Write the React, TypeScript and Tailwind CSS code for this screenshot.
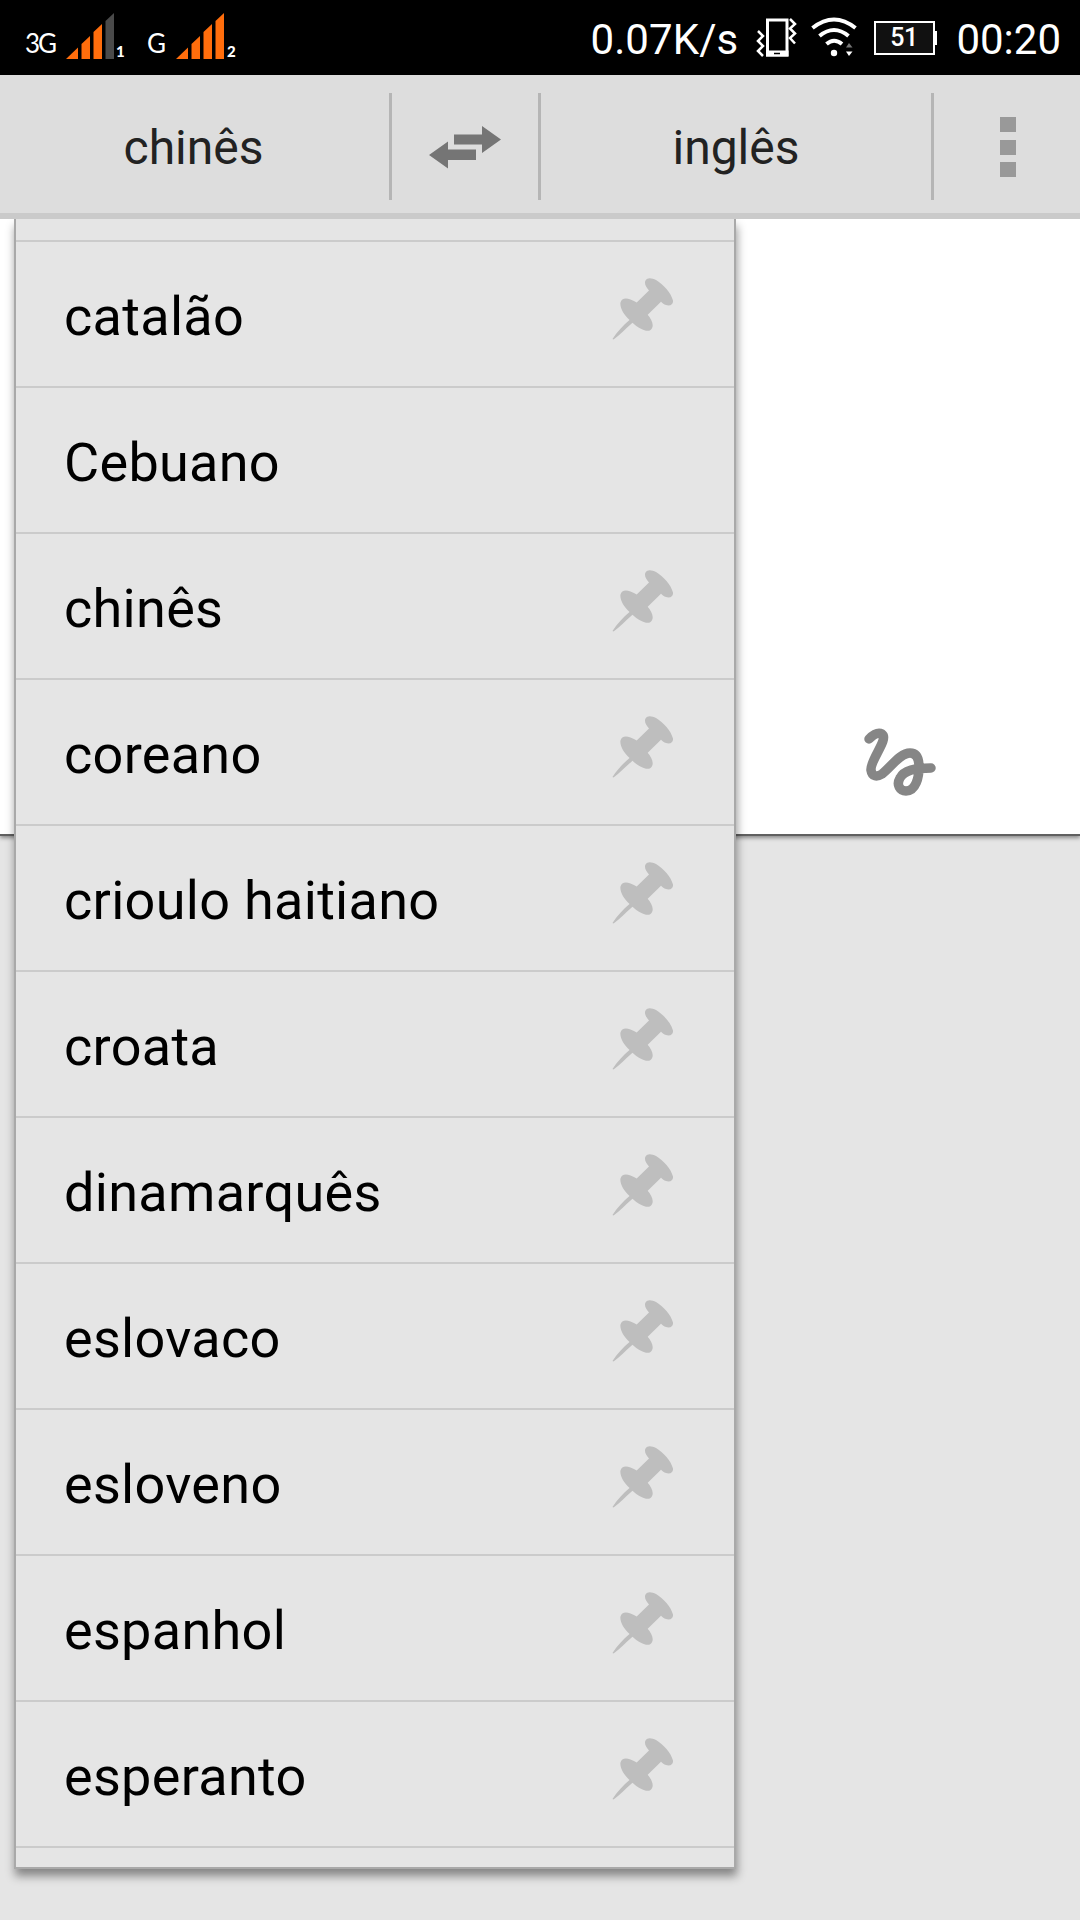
import React from 'react';

interface Language {
  name: string;
  pinnable: boolean;
}

const languages: Language[] = [
  { name: 'catalão', pinnable: true },
  { name: 'Cebuano', pinnable: false },
  { name: 'chinês', pinnable: true },
  { name: 'coreano', pinnable: true },
  { name: 'crioulo haitiano', pinnable: true },
  { name: 'croata', pinnable: true },
  { name: 'dinamarquês', pinnable: true },
  { name: 'eslovaco', pinnable: true },
  { name: 'esloveno', pinnable: true },
  { name: 'espanhol', pinnable: true },
  { name: 'esperanto', pinnable: true },
];

function PinIcon() {
  return (
    <svg width="62" height="62" viewBox="0 0 62 62" className="shrink-0" fill="#bebebe">
      <path d="M0.5 61 C5 54 11 47.500 17.500 42 C11.500 36.500 7.500 29.500 8.500 24.500 C9.500 20 14 19.500 18.500 21.500 C21 22.500 23 23.500 24.700 24.500 L37 12.500 C34 9 32 5.500 33.500 2.500 C35.500 -1 40 0 44 2 C52 7 59 15 61 22.500 C61.500 26.500 58 28.500 54 27 C52 26.500 50.500 25 49 23.700 L35.700 36.700 C38.500 40 41.500 45 40.500 49 C39 54 34 53.500 29.500 51 C26 49.500 23 47 20.500 44.700 C14 50.500 8 56.500 1.500 61.500 Z" />
    </svg>
  );
}

function SignalIcon({ weak }: { weak?: boolean }) {
  return (
    <svg width="49" height="47" viewBox="0 0 49 47" fill="#ff6d0c">
      <path d="M0 46 L12 34.500 V46 Z" />
      <path d="M15.500 31 L24 23 V46 H15.500 Z" />
      <path d="M27.500 19 L36 11 V46 H27.500 Z" />
      <path d="M39.500 8 L48 0 V46 H39.500 Z" fill={weak ? '#4a4a4a' : '#ff6d0c'} />
    </svg>
  );
}

function StatusBar() {
  return (
    <div className="flex h-[75px] bg-black text-white">
      {/* SIM signals */}
      <div className="flex h-[60px] items-end pl-[25px]">
        <span className="w-[41px] font-['Lato'] text-[26px] leading-[34px] tracking-[-2px]">3G</span>
        <SignalIcon weak />
        <span className="w-[32px] pl-px font-['Lato'] text-[15px] leading-[18px] font-black">1</span>
        <span className="w-[29px] font-['Lato'] text-[26px] leading-[34px]">G</span>
        <SignalIcon />
        <span className="pl-0.5 font-['Lato'] text-[15px] leading-[18px] font-black">2</span>
      </div>

      {/* Network speed, icons and clock */}
      <div className="ml-auto flex h-[75px] items-center pr-[19px]">
        <span className="pt-1 text-[42px] leading-none tracking-[0.1px]">0.07K/s</span>
        <svg width="42" height="42" viewBox="0 0 42 42" className="ml-[18px]" fill="none" stroke="#fff">
          <rect x="11.500" y="3" width="19.500" height="35" strokeWidth="3" />
          <path d="M10 36.500 H32.500" strokeWidth="6" />
          <path d="M18 36.500 H24" stroke="#000" strokeWidth="1.500" />
          <path d="M34 2 L39 7 L34 11.500 L39 16.500 L34 21 L39 26.500" strokeWidth="2.500" />
          <path d="M2 14 L7 19 L2 24 L7 29 L2 34 L7 39" strokeWidth="2.500" />
        </svg>
        <svg width="46" height="42" viewBox="0 0 46 42" className="ml-[13px]" fill="none" stroke="#fff" strokeWidth="4">
          <path d="M1.500 11 Q23 -6 44.500 11" />
          <path d="M8.500 19 Q23 7 37.500 19" />
          <path d="M15.500 27 Q23 20.500 31 27" />
          <circle cx="23" cy="36" r="3.200" fill="#fff" stroke="none" />
          <path d="M35 30.500 L38 26 L41.500 30.500 Z" fill="#777" stroke="none" />
          <path d="M35 34.500 H41.500 L38 39 Z" fill="#fff" stroke="none" />
        </svg>
        <div className="ml-[17px] flex h-[34px] w-[61px] items-center justify-center border-2 border-white bg-[#111] pr-0.5 text-[25px] leading-none font-medium tracking-[-0.5px]">
          51
        </div>
        <div className="h-[14px] w-[2px] bg-white" />
        <span className="ml-[19px] pt-1 text-[42px] leading-none">00:20</span>
      </div>
    </div>
  );
}

function Divider() {
  return <div className="h-[107px] w-[3px] bg-[#b5b5b5]" />;
}

function Toolbar() {
  return (
    <div className="flex h-[144px] border-b-[6px] border-[#cacaca] bg-[#dddddd] pt-[18px] text-[48px] text-[#222]">
      <div className="flex h-[107px] w-[389px] items-center justify-center pt-[3px] pr-[2px]">chinês</div>
      <Divider />
      <div className="flex h-[107px] w-[146px] justify-center pt-[33px]">
        <svg width="72" height="43" viewBox="0 0 72 43" fill="#757575">
          <path d="M25 8.500 H53 V0 L72 13.500 L53 27 V18.500 H25 Z" />
          <path d="M47 23.500 H19 V15.500 L0 29 L19 42.500 V34 H47 Z" />
        </svg>
      </div>
      <Divider />
      <div className="flex h-[107px] w-[390px] items-center justify-center pt-[3px]">inglês</div>
      <Divider />
      <div className="flex flex-1 flex-col items-center gap-[7.5px] pt-[24px] pl-[2px]">
        <div className="h-[15px] w-[16px] bg-[#999]" />
        <div className="h-[15px] w-[16px] bg-[#999]" />
        <div className="h-[15px] w-[16px] bg-[#999]" />
      </div>
    </div>
  );
}

function LanguageMenu() {
  return (
    <div className="absolute top-0 left-[14px] w-[722px] border-2 border-t-0 border-[#a9a9a9] bg-[#e5e5e5] shadow-[1px_7px_9px_rgba(0,0,0,0.42)]">
      <div className="h-[21px]" />
      {languages.map((language) => (
        <div key={language.name} className="flex h-[146px] items-center justify-between border-t-2 border-[#cbcbcb] pr-[60px] pl-[48px]">
          <span className="pt-[5px] text-[54px] leading-none tracking-[0.3px] text-black">{language.name}</span>
          {language.pinnable && <div className="-mt-2.5"><PinIcon /></div>}
        </div>
      ))}
      <div className="h-[21px] border-t-2 border-[#cbcbcb]" />
    </div>
  );
}

export default function App() {
  return (
    <div className="flex h-[1920px] w-[1080px] flex-col overflow-hidden bg-[#e5e5e5] font-['Roboto',sans-serif]">
      <StatusBar />
      <Toolbar />
      <div className="relative flex-1 overflow-hidden">
        {/* Text input with the handwriting button */}
        <div className="flex h-[617px] items-end justify-end border-b-2 border-[#606060] bg-white pr-[143px] pb-[38px] shadow-[0_2px_4px_rgba(0,0,0,0.4)]">
          <svg width="74" height="68" viewBox="0 0 74 68" fill="none" stroke="#868686" strokeWidth="9.500" strokeLinecap="round" strokeLinejoin="round">
            <path d="M6 11 C10 7 15 4 19 6 C26 11 7 32 8 42 C9 49 14 49 19 46 C28 39 37 25 47 25 C54 25 56 31 56 39 C56 49 53 63 43 63 C37 63 33 57 37 50 C41 42 52 40 68 40" />
          </svg>
        </div>
        <LanguageMenu />
      </div>
    </div>
  );
}
